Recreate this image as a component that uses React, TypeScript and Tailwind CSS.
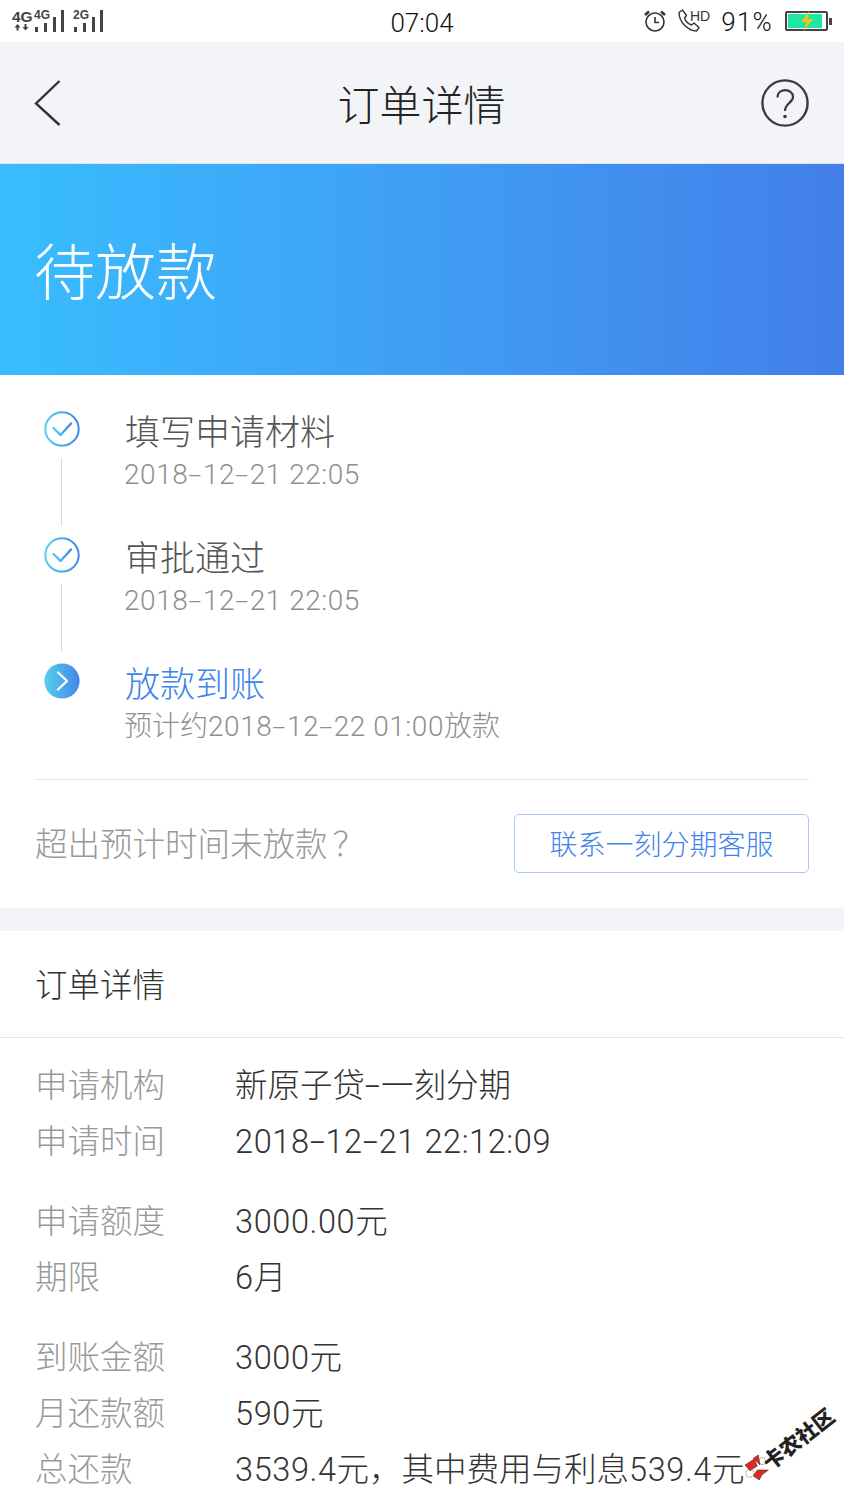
const rows = [
  [
    { label: "申请机构", value: "新原子贷-一刻分期" },
    { label: "申请时间", value: "2018-12-21 22:12:09" },
  ],
  [
    { label: "申请额度", value: "3000.00元" },
    { label: "期限", value: "6月" },
  ],
  [
    { label: "到账金额", value: "3000元" },
    { label: "月还款额", value: "590元" },
    { label: "总还款", value: "3539.4元，其中费用与利息539.4元" },
  ],
];

const steps = [
  { title: "填写申请材料", sub: "2018-12-21 22:05", done: true },
  { title: "审批通过", sub: "2018-12-21 22:05", done: true },
  { title: "放款到账", sub: "预计约2018-12-22 01:00放款", done: false },
];

// the phone font has wider digits and a long hyphen compared with Roboto
function PhoneText({ text, latin }: { text: string; latin: string }) {
  const parts = text.split(/([\u4e00-\u9fff，]+)/).filter(Boolean);
  return (
    <>
      {parts.map((part, i) =>
        /[\u4e00-\u9fff，]/.test(part) ? (
          <span key={i}>{part}</span>
        ) : (
          <span key={i} className={latin}>
            {part.split("-").map((p, j) => (
              <span key={j}>
                {j > 0 && <span className="mx-[3px] inline-block scale-x-[1.7]">-</span>}
                {p}
              </span>
            ))}
          </span>
        )
      )}
    </>
  );
}

function CheckIcon({ id }: { id: string }) {
  return (
    <svg width="36" height="36" viewBox="0 0 36 36" fill="none">
      <defs>
        <linearGradient id={id} x1="0" y1="0" x2="1" y2="0">
          <stop offset="0" stopColor="#56d0ec" />
          <stop offset="1" stopColor="#4286ea" />
        </linearGradient>
      </defs>
      <circle cx="18" cy="18" r="16.7" stroke={`url(#${id})`} strokeWidth="2" />
      <path d="M9.5 17 L16.5 24 L27 12.5" stroke={`url(#${id})`} strokeWidth="2.4" strokeLinecap="round" strokeLinejoin="round" />
    </svg>
  );
}

function NextIcon() {
  return (
    <svg width="36" height="36" viewBox="0 0 36 36" fill="none">
      <defs>
        <linearGradient id="nextfill" x1="0" y1="0" x2="1" y2="0">
          <stop offset="0" stopColor="#56d0ec" />
          <stop offset="1" stopColor="#4286ea" />
        </linearGradient>
      </defs>
      <circle cx="18" cy="18" r="17.6" fill="url(#nextfill)" />
      <path d="M14 9.5 L23 18 L14 26.5" stroke="#fff" strokeWidth="2.4" strokeLinecap="round" strokeLinejoin="round" />
    </svg>
  );
}

function NetworkIcons() {
  return (
    <svg width="200" height="42" viewBox="12 0 200 42" fill="#444" fontFamily="Liberation Sans" fontWeight="bold">
      <text x="12" y="22" fontSize="15.5">4G</text>
      <path d="M17.5 24 L20.5 27.5 H18.5 V30.5 H16.5 V27.5 H14.5 Z M24.5 24 H26.5 V27 H28.5 L25.5 30.5 L22.5 27 H24.5 Z" />
      <text x="34" y="18.5" fontSize="12">4G</text>
      <rect x="35" y="27" width="3" height="5" />
      <rect x="44" y="23" width="3" height="9" />
      <rect x="53" y="17" width="3" height="15" />
      <rect x="61" y="10" width="3" height="22" />
      <text x="73" y="18.5" fontSize="12">2G</text>
      <rect x="74" y="27" width="3" height="5" />
      <rect x="83" y="23" width="3" height="9" />
      <rect x="92" y="17" width="3" height="15" />
      <rect x="100" y="10" width="3" height="22" />
    </svg>
  );
}

function StatusBar() {
  return (
    <div className="flex h-[42px] items-center justify-between bg-white px-[12px] text-[#222]">
      <div className="w-[200px]">
        <NetworkIcons />
      </div>
      <div className="mt-[4px] text-[26px] font-light leading-none text-[#111]">07:04</div>
      <div className="flex w-[200px] items-center justify-end">
        <svg width="24" height="22" viewBox="0 0 24 22" fill="none" stroke="#333" strokeWidth="1.6" className="mr-[9px]">
          <circle cx="12" cy="12" r="9" />
          <path d="M12 7 V12.5 H16" />
          <path d="M2 5 L6 1.5 M22 5 L18 1.5" strokeWidth="2.6" />
        </svg>
        <svg width="34" height="26" viewBox="0 0 34 26" fill="none" className="mr-[11px]">
          <path d="M3 4.5 L6.5 2 L10.5 7.5 L8.5 10 C9.5 13 12.5 16 15.5 17 L18 15 L23 19.5 L20.5 23 C12 23 3 14 3 4.5 Z" stroke="#333" strokeWidth="1.4" strokeLinejoin="round" />
          <text x="14" y="12.5" fontSize="14" fontFamily="Liberation Sans" fill="#333">HD</text>
        </svg>
        <span className="mr-[12px] mt-[2px] text-[26px] font-light leading-none tracking-[1.2px] text-[#111]">91%</span>
        <div className="relative flex h-[21px] w-[47px] items-center">
          <div className="h-[20px] w-[43px] rounded-[2px] border-2 border-[#444] bg-white p-[1px]">
            <div className="h-full w-[34px] bg-[#1ee8a0]" />
          </div>
          <div className="ml-[1px] h-[7px] w-[3px] bg-[#444]" />
          <svg width="14" height="20" viewBox="0 0 14 20" className="absolute left-[15px] top-[0px]">
            <path d="M9 0 L1 11 H6 L4 20 L13 8 H8 Z" fill="#e9c426" />
          </svg>
        </div>
      </div>
    </div>
  );
}

function NavBar() {
  return (
    <div className="flex h-[122px] items-center justify-between border-b border-[#e3e4e8] bg-[#f2f4f8] pl-[34px] pr-[35px]">
      <div className="w-[48px]">
        <svg width="28" height="48" viewBox="0 0 28 48" fill="none" stroke="#333" strokeWidth="2.4">
          <path d="M25.5 2 L2 24.5 L25.5 46" />
        </svg>
      </div>
      <div className="pt-[8px] text-[42px] font-light leading-none text-[#222]">订单详情</div>
      <svg width="48" height="48" viewBox="0 0 48 48" fill="none" stroke="#3b3b3b" strokeWidth="2.4">
        <circle cx="24" cy="24" r="22.6" />
        <path d="M16.5 18.5 C16.5 8.5 32 9 32 18 C32 24 24 24 24 32" strokeWidth="2.2" />
        <circle cx="24" cy="37.5" r="1.8" fill="#3b3b3b" stroke="none" />
      </svg>
    </div>
  );
}

function Timeline() {
  return (
    <div className="pl-[44px] pt-[36px]">
      {steps.map((s, i) => (
        <div key={s.title} className="flex h-[126px] items-start">
          <div className="flex w-[36px] flex-col items-center">
            {s.done ? <CheckIcon id={`check${i}`} /> : <NextIcon />}
            {i < 2 && <div className="mr-[1px] mt-[11px] h-[68px] w-[1px] bg-[#d8d8d8]" />}
          </div>
          <div className="ml-[45px]">
            <div className={`mt-[2px] text-[35px] font-light leading-[42px] ${s.done ? "text-[#555]" : "text-[#3f83ec]"}`}>{s.title}</div>
            <div className="ml-[-1px] text-[28px] font-light leading-[40px] text-[#8f8f8f]">
              <PhoneText text={s.sub} latin="tracking-[0.55px]" />
            </div>
          </div>
        </div>
      ))}
    </div>
  );
}

export default function App() {
  return (
    <div className="relative h-[1500px] w-[844px] overflow-hidden bg-white font-['Roboto','Noto_Sans_CJK_SC',sans-serif]">
      <StatusBar />
      <NavBar />
      <div className="flex h-[211px] items-center bg-gradient-to-r from-[#38bdff] to-[#437fe9] pl-[34px] pt-[10px]">
        <div className="text-[61px] font-light leading-none text-white">待放款</div>
      </div>
      <Timeline />
      <div className="mx-[35px] mt-[-10px] border-t border-[#e6e6e6]" />
      <div className="flex h-[128px] items-start justify-between px-[35px] pt-[34px]">
        <div className="mt-[10px] text-[32.5px] font-light leading-[42px] text-[#999]">
          超出预计时间未放款<span className="ml-[5px]">？</span>
        </div>
        <div className="flex h-[59px] w-[295px] items-center justify-center rounded-[5px] border border-[#a9c9f7] pt-[5px] text-[28px] font-light leading-none text-[#3f83ec]">
          联系一刻分期客服
        </div>
      </div>
      <div className="h-[23px] bg-[#f2f4f8]" />
      <div className="flex h-[107px] items-center border-b border-[#e6e6e6] pl-[35px] pt-[5px]">
        <div className="text-[32.5px] font-light leading-none text-[#333]">订单详情</div>
      </div>
      <div className="pl-[35px] pt-[20px]">
        {rows.map((group, i) => (
          <div key={i} className="mb-[24px]">
            {group.map((r) => (
              <div key={r.label} className="flex h-[56px] items-center">
                <div className="w-[200px] text-[32.5px] font-light leading-none text-[#999]">{r.label}</div>
                <div className="whitespace-nowrap text-[32.5px] font-light leading-none text-[#333]">
                  <PhoneText text={r.value} latin="tracking-[0.6px]" />
                </div>
              </div>
            ))}
          </div>
        ))}
      </div>
      <svg width="26" height="30" viewBox="0 0 26 30" className="absolute left-[744px] top-[1452px]">
        <circle cx="6" cy="21.3" r="4" fill="#fff" stroke="#333" strokeWidth="0.7" strokeDasharray="1 1" />
        <circle cx="18.3" cy="9" r="3.5" fill="#fff" stroke="#333" strokeWidth="0.7" strokeDasharray="1 1" />
        <path d="M1 13 L10.3 7 L13.3 14 L6 18.7 Z M9.3 6.3 L14.3 3 L16 13 Z M13.3 18 L24.3 18 L17.7 23 L15.3 28 L9.3 24 Z" fill="#e5271f" stroke="#222" strokeWidth="0.5" />
      </svg>
      <div className="absolute left-[756px] top-[1428px] rotate-[-38deg] whitespace-nowrap font-['Noto_Sans_CJK_SC',sans-serif] text-[21px] font-black leading-none text-[#222]">
        卡农社区
      </div>
    </div>
  );
}
